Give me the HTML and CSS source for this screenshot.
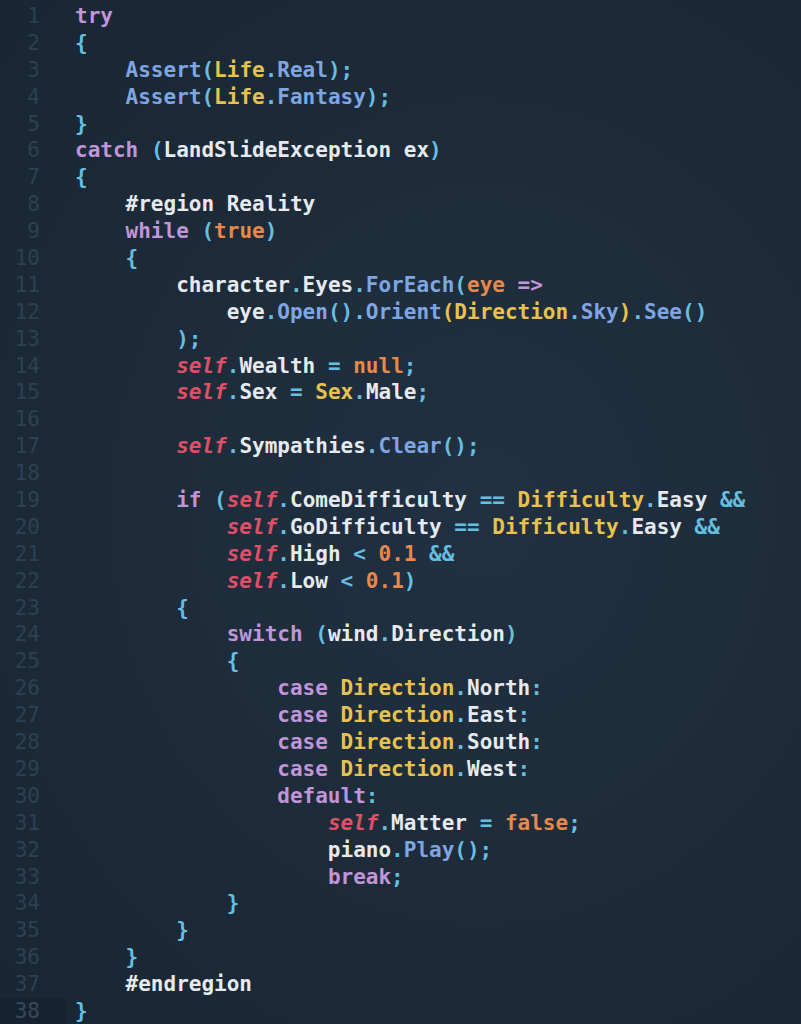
FILE: index.html
```html
<!DOCTYPE html>
<html>
<head>
<meta charset="utf-8">
<link rel="stylesheet" href="styles.css">
</head>
<body>
<div class="editor">
  <div class="gutter">
    <div class="ln">1</div><div class="ln">2</div><div class="ln">3</div><div class="ln">4</div><div class="ln">5</div><div class="ln">6</div><div class="ln">7</div><div class="ln">8</div><div class="ln">9</div><div class="ln">10</div>
    <div class="ln">11</div><div class="ln">12</div><div class="ln">13</div><div class="ln">14</div><div class="ln">15</div><div class="ln">16</div><div class="ln">17</div><div class="ln">18</div><div class="ln">19</div><div class="ln">20</div>
    <div class="ln">21</div><div class="ln">22</div><div class="ln">23</div><div class="ln">24</div><div class="ln">25</div><div class="ln">26</div><div class="ln">27</div><div class="ln">28</div><div class="ln">29</div><div class="ln">30</div>
    <div class="ln">31</div><div class="ln">32</div><div class="ln">33</div><div class="ln">34</div><div class="ln">35</div><div class="ln">36</div><div class="ln">37</div><div class="ln ln-active">38</div>
  </div>
<pre class="code"><div class="line"><span class="k">try</span></div><div class="line"><span class="p">{</span></div><div class="line">    <span class="f">Assert</span><span class="p">(</span><span class="t">Life</span><span class="p">.</span><span class="f">Real</span><span class="p">);</span></div><div class="line">    <span class="f">Assert</span><span class="p">(</span><span class="t">Life</span><span class="p">.</span><span class="f">Fantasy</span><span class="p">);</span></div><div class="line"><span class="p">}</span></div><div class="line"><span class="k">catch</span> <span class="p">(</span>LandSlideException ex<span class="p">)</span></div><div class="line"><span class="p">{</span></div><div class="line">    #region Reality</div><div class="line">    <span class="k">while</span> <span class="p">(</span><span class="c">true</span><span class="p">)</span></div><div class="line">    <span class="p">{</span></div><div class="line">        character<span class="p">.</span>Eyes<span class="p">.</span><span class="f">ForEach</span><span class="p">(</span><span class="c">eye</span> <span class="k">=&gt;</span></div><div class="line">            eye<span class="p">.</span><span class="f">Open</span><span class="p">().</span><span class="f">Orient</span><span class="t">(</span><span class="t">Direction</span><span class="p">.</span><span class="f">Sky</span><span class="t">)</span><span class="p">.</span><span class="f">See</span><span class="p">()</span></div><div class="line">        <span class="p">);</span></div><div class="line">        <span class="s">self</span><span class="p">.</span>Wealth <span class="p">=</span> <span class="c">null</span><span class="p">;</span></div><div class="line">        <span class="s">self</span><span class="p">.</span>Sex <span class="p">=</span> <span class="t">Sex</span><span class="p">.</span>Male<span class="p">;</span></div><div class="line"> </div><div class="line">        <span class="s">self</span><span class="p">.</span>Sympathies<span class="p">.</span><span class="f">Clear</span><span class="p">();</span></div><div class="line"> </div><div class="line">        <span class="k">if</span> <span class="p">(</span><span class="s">self</span><span class="p">.</span>ComeDifficulty <span class="p">==</span> <span class="t">Difficulty</span><span class="p">.</span>Easy <span class="p">&amp;&amp;</span></div><div class="line">            <span class="s">self</span><span class="p">.</span>GoDifficulty <span class="p">==</span> <span class="t">Difficulty</span><span class="p">.</span>Easy <span class="p">&amp;&amp;</span></div><div class="line">            <span class="s">self</span><span class="p">.</span>High <span class="p">&lt;</span> <span class="c">0.1</span> <span class="p">&amp;&amp;</span></div><div class="line">            <span class="s">self</span><span class="p">.</span>Low <span class="p">&lt;</span> <span class="c">0.1</span><span class="p">)</span></div><div class="line">        <span class="p">{</span></div><div class="line">            <span class="k">switch</span> <span class="p">(</span>wind<span class="p">.</span>Direction<span class="p">)</span></div><div class="line">            <span class="p">{</span></div><div class="line">                <span class="k">case</span> <span class="t">Direction</span><span class="p">.</span>North<span class="p">:</span></div><div class="line">                <span class="k">case</span> <span class="t">Direction</span><span class="p">.</span>East<span class="p">:</span></div><div class="line">                <span class="k">case</span> <span class="t">Direction</span><span class="p">.</span>South<span class="p">:</span></div><div class="line">                <span class="k">case</span> <span class="t">Direction</span><span class="p">.</span>West<span class="p">:</span></div><div class="line">                <span class="k">default</span><span class="p">:</span></div><div class="line">                    <span class="s">self</span><span class="p">.</span>Matter <span class="p">=</span> <span class="c">false</span><span class="p">;</span></div><div class="line">                    piano<span class="p">.</span><span class="f">Play</span><span class="p">();</span></div><div class="line">                    <span class="k">break</span><span class="p">;</span></div><div class="line">            <span class="p">}</span></div><div class="line">        <span class="p">}</span></div><div class="line">    <span class="p">}</span></div><div class="line">    #endregion</div><div class="line"><span class="p">}</span></div></pre>
</div>
</body>
</html>
```

FILE: styles.css
```css
html, body {
  margin: 0;
  padding: 0;
  background: #1c2a38;
}

.editor {
  width: 801px;
  height: 1024px;
  overflow: hidden;
  display: flex;
  padding-top: 3px;
  box-sizing: border-box;
  background: radial-gradient(ellipse 80% 70% at 60% 50%, #213142 0%, #1d2b39 55%, #192633 100%);
  font-family: "DejaVu Sans Mono", "Liberation Mono", monospace;
  font-size: 21px;
  line-height: 26.9px;
}

.gutter {
  width: 66px;
  flex: none;
  display: flex;
  flex-direction: column;
}

.ln {
  height: 26.9px;
  padding-right: 26px;
  text-align: right;
  color: #2d4153;
}

.ln-active {
  background: #172230;
  color: #36495b;
}

.code {
  margin: 0 0 0 9px;
  font: inherit;
  color: #e6eaee;
  white-space: pre;
  font-weight: 600;
}

.line {
  height: 26.9px;
}

.k { color: #c195d9; }
.p { color: #66bfe0; }
.f { color: #7ea6e2; }
.t { color: #e8c24e; }
.c { color: #e8884a; }
.s { color: #e04f68; font-style: italic; }
```
